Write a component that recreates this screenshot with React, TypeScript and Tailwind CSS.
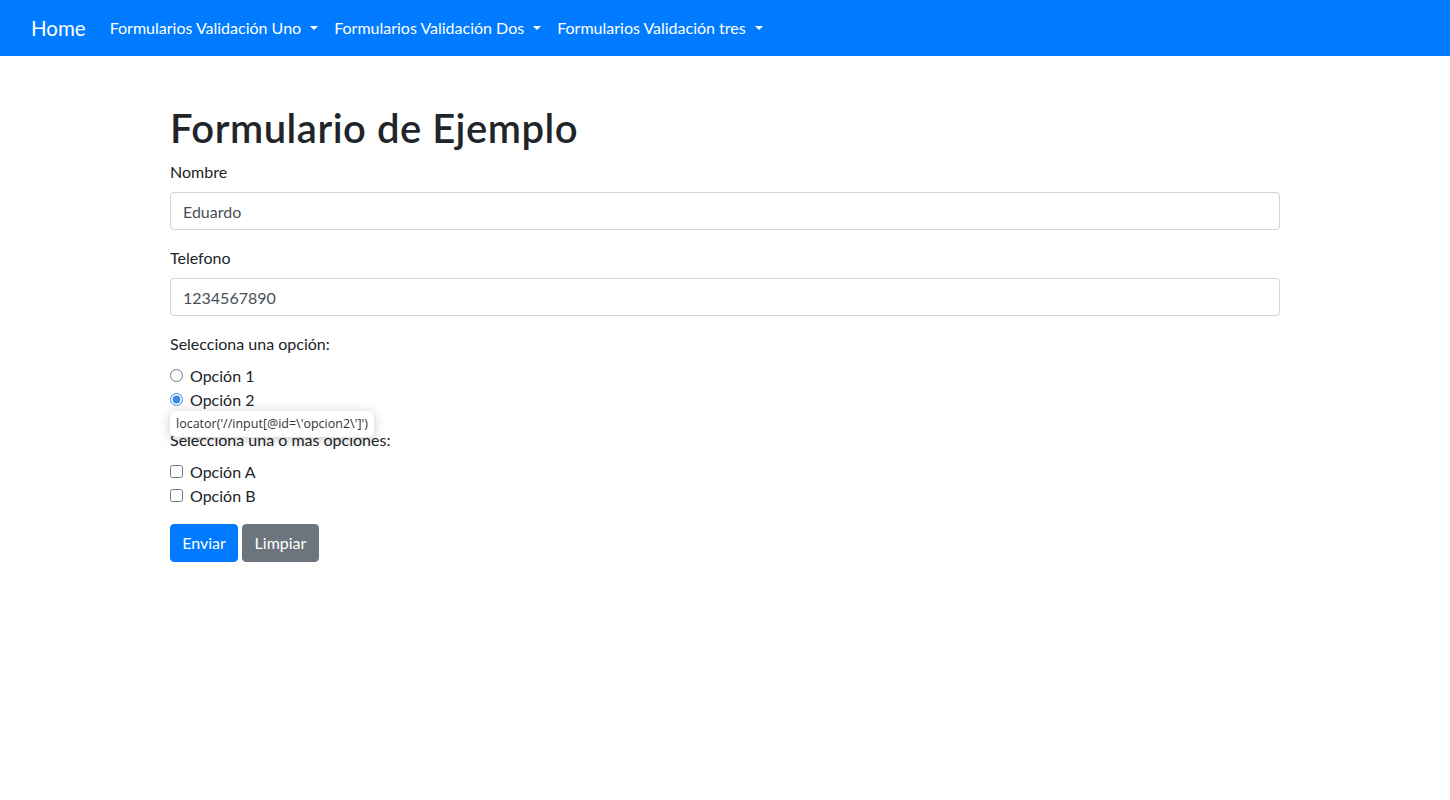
import React from 'react';

const font = { fontFamily: 'Lato, "Noto Sans", sans-serif' };

const NavDropdown = ({ label }: { label: string }) => (
  <a className="flex items-center px-2 py-2 text-base leading-6 text-white cursor-pointer">
    {label}
    <span className="ml-[9px] inline-block h-0 w-0 border-x-[4.8px] border-t-[4.8px] border-x-transparent border-t-white" />
  </a>
);

export default function App() {
  return (
    <div className="min-h-[800px] bg-white text-[#212529]" style={font}>
      <nav className="flex h-14 items-center bg-[#007bff] px-[31px] py-2">
        <a className="mr-4 py-[5px] text-[20.5px] leading-[30px] text-white">Home</a>
        <div className="flex">
          <NavDropdown label="Formularios Validación Uno" />
          <NavDropdown label="Formularios Validación Dos" />
          <NavDropdown label="Formularios Validación tres" />
        </div>
      </nav>

      <div className="mx-auto mt-12 w-[1140px] px-[15px]">
        <h1 className="mb-2 text-[40px] font-semibold leading-[1.2] tracking-[0.5px]">Formulario de Ejemplo</h1>
        <form>
          <div className="mb-4">
            <label className="mb-2 block text-base leading-6">Nombre</label>
            <input
              defaultValue="Eduardo"
              className="block h-[38px] w-full rounded border border-[#ced4da] px-3 py-1.5 text-base text-[#495057] outline-none"
            />
          </div>
          <div className="mb-4">
            <label className="mb-2 block text-base leading-6">Telefono</label>
            <input
              defaultValue="1234567890"
              className="block h-[38px] w-full rounded border border-[#ced4da] px-3 py-1.5 text-base text-[#495057] outline-none"
            />
          </div>

          <div className="relative mb-4">
            <label className="mb-2 block text-base leading-6">Selecciona una opción:</label>
            <div className="relative pl-5 leading-6">
              <input type="radio" name="op" className="absolute -ml-5 mt-[0.3rem] h-[13px] w-[13px]" />
              <label>Opción 1</label>
            </div>
            <div className="relative pl-5 leading-6">
              <input type="radio" name="op" defaultChecked className="absolute -ml-5 mt-[0.3rem] h-[13px] w-[13px] accent-[#3b8be0]" />
              <label>Opción 2</label>
            </div>
            {/* playwright locator overlay */}
            <div
              className="absolute left-0 top-[79px] z-10 flex h-[26px] items-center rounded-md bg-white px-[6px] text-[12.5px] text-[#333] shadow-[0_2px_12px_rgba(0,0,0,0.22)]"
              style={{ fontFamily: '"Open Sans", sans-serif' }}
            >
              locator('//input[@id=\'opcion2\']')
            </div>
          </div>

          <div className="mb-4">
            <label className="mb-2 block text-base leading-6">Selecciona una o más opciones:</label>
            <div className="relative pl-5 leading-6">
              <input type="checkbox" className="absolute -ml-5 mt-[0.3rem] h-[13px] w-[13px]" />
              <label>Opción A</label>
            </div>
            <div className="relative pl-5 leading-6">
              <input type="checkbox" className="absolute -ml-5 mt-[0.3rem] h-[13px] w-[13px]" />
              <label>Opción B</label>
            </div>
          </div>

          <div className="flex gap-1">
            <button type="button" className="h-[38px] w-[68px] rounded border border-[#007bff] bg-[#007bff] text-base leading-6 text-white">
              Enviar
            </button>
            <button type="button" className="h-[38px] w-[77px] rounded border border-[#6c757d] bg-[#6c757d] text-base leading-6 text-white">
              Limpiar
            </button>
          </div>
        </form>
      </div>
    </div>
  );
}
